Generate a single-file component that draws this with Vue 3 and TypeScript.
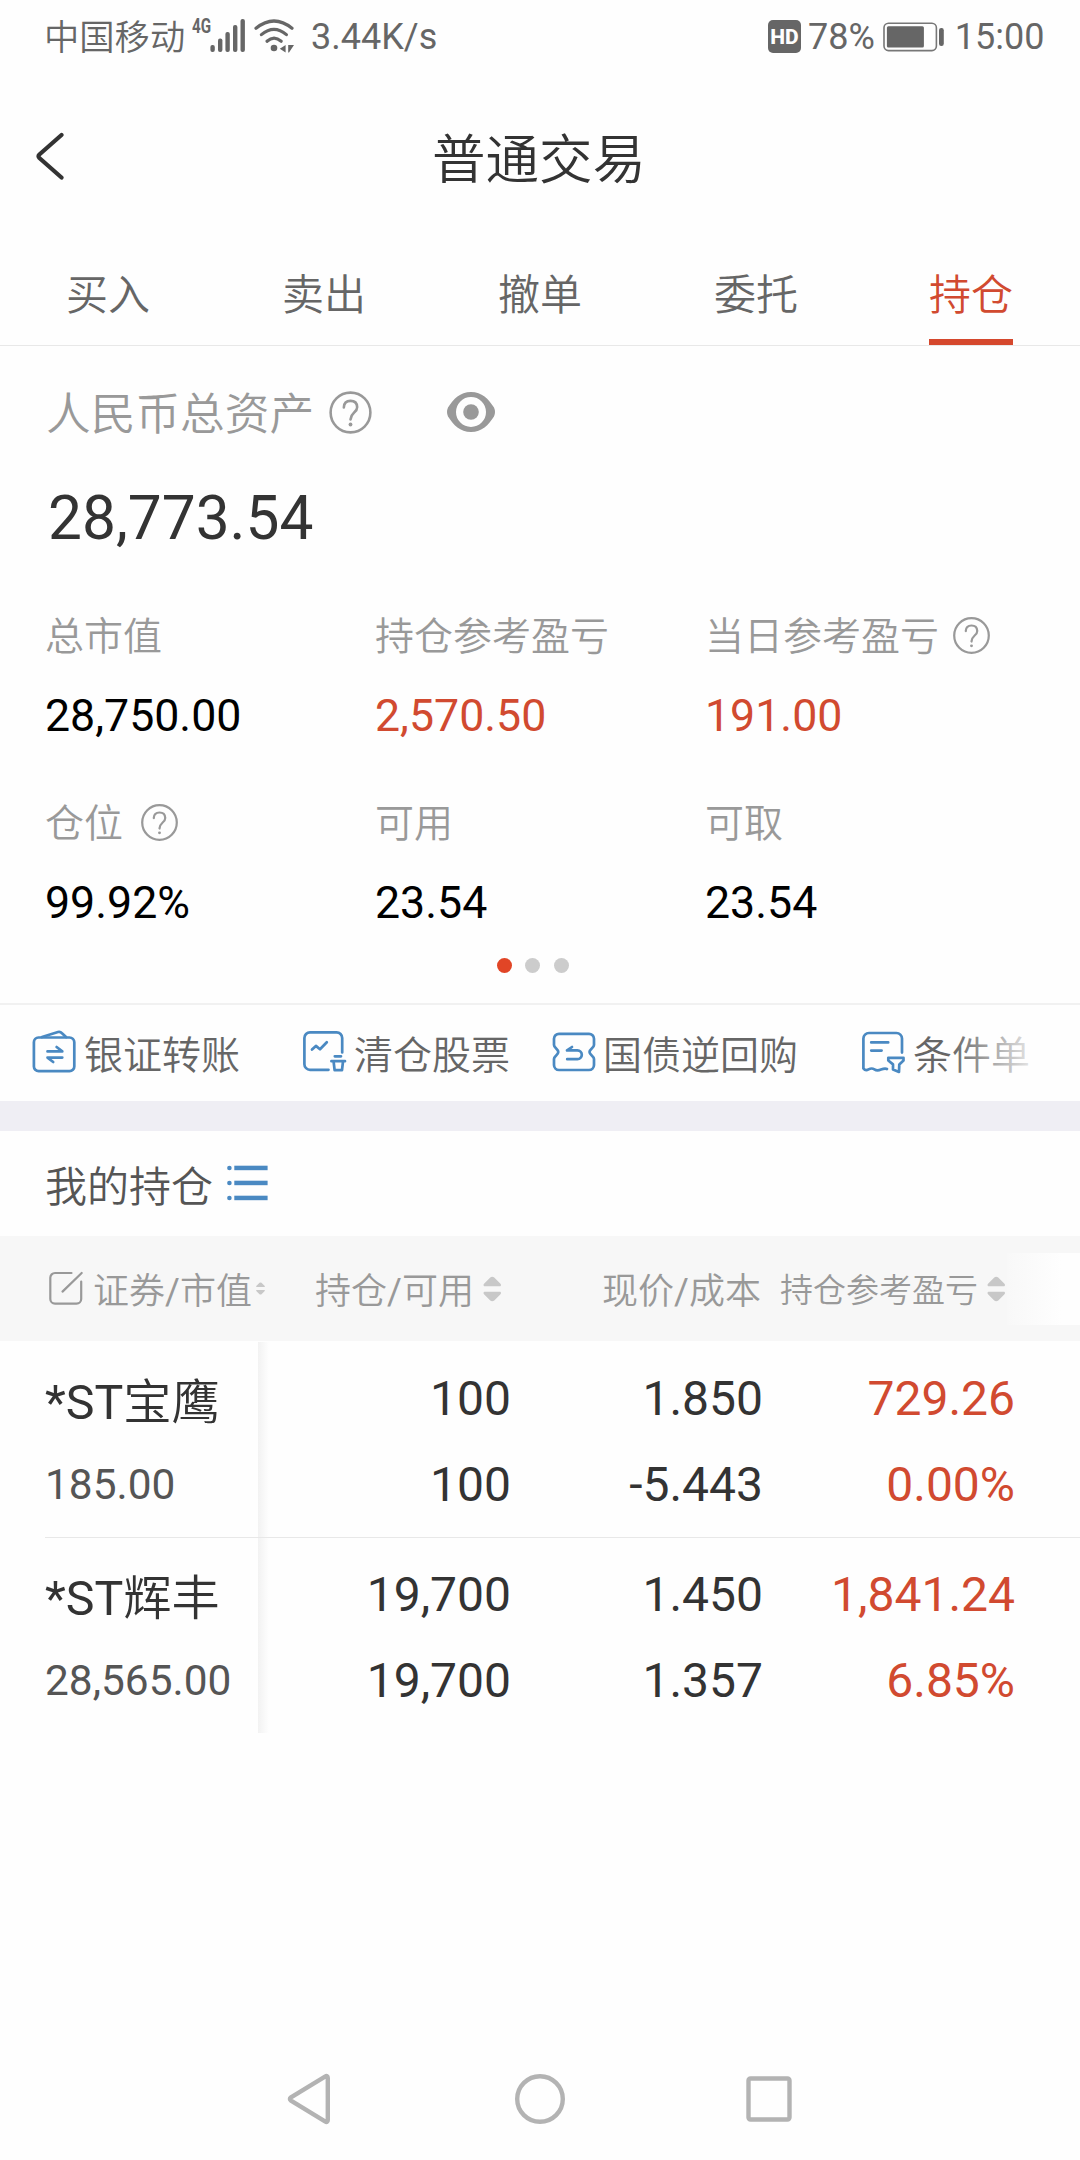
<script setup lang="ts">
interface Tab { label: string; active?: boolean }
interface Metric { label: string; value: string; up?: boolean; help?: boolean }
interface Action { label: string; icon: string[] }
interface Holding {
  prefix: string
  name: string
  marketValue: string
  cells: { top: string; bottom: string; up?: boolean }[]
}

const tabs: Tab[] = [
  { label: '买入' },
  { label: '卖出' },
  { label: '撤单' },
  { label: '委托' },
  { label: '持仓', active: true },
]

const metrics: Metric[] = [
  { label: '总市值', value: '28,750.00' },
  { label: '持仓参考盈亏', value: '2,570.50', up: true },
  { label: '当日参考盈亏', value: '191.00', up: true, help: true },
  { label: '仓位', value: '99.92%', help: true },
  { label: '可用', value: '23.54' },
  { label: '可取', value: '23.54' },
]

const actions: Action[] = [
  {
    label: '银证转账',
    icon: [
      'M6.5 8.5H37.5A4.8 4.8 0 0 1 42.3 13.3V37.4A4.8 4.8 0 0 1 37.5 42.2H6.7A4.8 4.8 0 0 1 1.9 37.4V13.3A4.8 4.8 0 0 1 6.5 8.5Z',
      'M10 8L26 3Q28.3 2.4 30 4.2L34 8',
      'M15.5 22.4H30.3L24.6 18M30.3 28.6H15.5L21.2 33',
    ],
  },
  {
    label: '清仓股票',
    icon: [
      'M40.2 23.5V9A5.6 5.6 0 0 0 34.6 3.4H8A5.6 5.6 0 0 0 2.4 9V35.2A5.6 5.6 0 0 0 8 40.8H26.5',
      'M10 20.6L13.9 16.9L18 20.3L24.8 13.2',
      'M32.8 27.3H39M29.4 32.2H43M31.6 32.5L32.6 41.2H40L41 32.5',
    ],
  },
  {
    label: '国债逆回购',
    icon: [
      'M8 4.8H38A5 5 0 0 1 43 9.8V16C43 19 38.5 20 38.5 23S43 27 43 30V36A5 5 0 0 1 38 41H8A5 5 0 0 1 3 36V30C3 27 7.3 26 7.3 23S3 19 3 16V9.8A5 5 0 0 1 8 4.8Z',
      'M21 18L16 21.4H26.4A4.4 4.4 0 0 1 26.4 30.2H16.2',
    ],
  },
  {
    label: '条件单',
    icon: [
      'M41 23.6V9.6A5.6 5.6 0 0 0 35.4 4H8A5.6 5.6 0 0 0 2.4 9.6V39.5Q4.5 42.2 7.6 40.4T13.4 40.4T20 40.6T26 40',
      'M10.2 13.4H27.2M10.2 21.6H20.6',
      'M27.3 28.8H42.5V31.5L38.3 35.4L38 43L32 40.6V35.4L27.3 31.5Z',
    ],
  },
]

const holdings: Holding[] = [
  {
    prefix: '*ST',
    name: '宝鹰',
    marketValue: '185.00',
    cells: [
      { top: '100', bottom: '100' },
      { top: '1.850', bottom: '-5.443' },
      { top: '729.26', bottom: '0.00%', up: true },
    ],
  },
  {
    prefix: '*ST',
    name: '辉丰',
    marketValue: '28,565.00',
    cells: [
      { top: '19,700', bottom: '19,700' },
      { top: '1.450', bottom: '1.357' },
      { top: '1,841.24', bottom: '6.85%', up: true },
    ],
  },
]
</script>

<template>
  <div class="screen">
    <div class="status">
      <span class="cjk carrier">中国移动</span>
      <span class="net">4G</span>
      <svg class="signal" width="36" height="34" viewBox="0 0 36 34">
        <g fill="#666">
          <rect x="0.4" y="26" width="4.4" height="7" rx="2" />
          <rect x="8" y="19.5" width="4.4" height="13.5" rx="2" />
          <rect x="15.4" y="13" width="4.4" height="20" rx="2" />
          <rect x="23" y="6" width="4.4" height="27" rx="2" />
          <rect x="30.5" y="0" width="4.4" height="33" rx="2" />
        </g>
      </svg>
      <svg class="wifi" width="40" height="34" viewBox="0 0 40 34">
        <g fill="none" stroke="#666" stroke-width="3.2" stroke-linecap="round">
          <path d="M2 9.3Q20 -5.3 38 9.3" />
          <path d="M7.4 15.6Q20 5 32.4 15.6" />
          <path d="M13 22.2Q20 16 27.2 22.2" />
        </g>
        <circle cx="20" cy="29" r="3.3" fill="#666" />
        <path d="M25.8 29.7L31.6 26V33.4ZM34.2 26H40L35 33.4H34.2Z" fill="#666" />
      </svg>
      <span class="speed">3.44K/s</span>
      <span class="hd">HD</span>
      <span class="pct">78%</span>
      <svg class="battery" width="62" height="30" viewBox="0 0 62 30">
        <rect x="1" y="1.2" width="52.4" height="27.4" rx="4.5" fill="none" stroke="#777" stroke-width="1.6" />
        <rect x="3.9" y="4.2" width="37" height="21.2" rx="1.5" fill="#666" />
        <rect x="56" y="6" width="4.8" height="18" rx="2.2" fill="#666" />
      </svg>
      <span class="clock">15:00</span>
    </div>

    <header class="title-bar">
      <svg class="back" width="30" height="50" viewBox="0 0 30 50">
        <path d="M26.5 4L4.400 23.5Q2.700 25.2 4.400 27L26.5 46.5" fill="none" stroke="#333" stroke-width="4.2" stroke-linecap="round" />
      </svg>
      <h1 class="cjk">普通交易</h1>
    </header>

    <nav class="tabs">
      <div v-for="t in tabs" :key="t.label" class="tab cjk" :class="{ active: t.active }">
        <span>{{ t.label }}</span>
      </div>
    </nav>

    <section class="assets">
      <div class="asset-label">
        <span class="cjk">人民币总资产</span>
        <svg class="help-lg" width="43" height="43" viewBox="0 0 40 40">
          <circle cx="20" cy="20" r="18.5" />
          <path d="M13.8 15.3Q14 9.2 20 9.2T26.2 15Q26.2 17.6 23.4 20T20 26.5" />
          <circle class="pt" cx="20" cy="31.2" r="1.8" />
        </svg>
        <svg class="eye" width="48" height="40" viewBox="0 0 48 40">
          <path fill="#999" fill-rule="evenodd" d="M24 0C35 0 41.5 7 47 15.5Q49 20 47 24.5C41.5 33 35 40 24 40S6.5 33 1 24.5Q-1 20 1 15.5C6.5 7 13 0 24 0ZM24 5A15 15 0 1 0 24 35A15 15 0 1 0 24 5Z" />
          <circle cx="24" cy="20" r="7.8" fill="#999" />
        </svg>
      </div>
      <div class="total">28,773.54</div>
      <div class="metrics">
        <div v-for="m in metrics" :key="m.label" class="metric">
          <div class="m-label">
            <span class="cjk">{{ m.label }}</span>
            <svg v-if="m.help" width="37" height="37" viewBox="0 0 40 40">
              <circle cx="20" cy="20" r="18.7" />
              <path d="M13.8 15.3Q14 9.2 20 9.2T26.2 15Q26.2 17.6 23.4 20T20 26.5" />
              <circle class="pt" cx="20" cy="31.2" r="1.6" />
            </svg>
          </div>
          <div class="m-value" :class="{ up: m.up }">{{ m.value }}</div>
        </div>
      </div>
      <div class="dots"><i class="on"></i><i></i><i></i></div>
    </section>

    <section class="actions">
      <div v-for="a in actions" :key="a.label" class="action">
        <svg width="45" height="45" viewBox="0 0 45 45">
          <path v-for="d in a.icon" :key="d" :d="d" />
        </svg>
        <span class="cjk">{{ a.label }}</span>
      </div>
      <div class="fade"></div>
    </section>

    <div class="band"></div>

    <section class="holdings">
      <div class="h-title">
        <span class="cjk">我的持仓</span>
        <svg width="41" height="36" viewBox="0 0 41 36">
          <g fill="#4a89c2">
            <circle cx="2.4" cy="3" r="2.3" /><circle cx="2.4" cy="18" r="2.3" /><circle cx="2.4" cy="33" r="2.3" />
            <rect x="7.3" y="0.7" width="33.3" height="4.5" /><rect x="7.3" y="15.7" width="33.3" height="4.5" /><rect x="7.3" y="30.7" width="33.3" height="4.5" />
          </g>
        </svg>
      </div>
      <div class="t-head cjk">
        <div class="th name">
          <svg class="edit" width="36" height="35" viewBox="0 0 36 35">
            <path d="M23.5 2H7A4.700 4.700 0 0 0 2.300 6.700V28A4.700 4.700 0 0 0 7 32.700H28.500A4.700 4.700 0 0 0 33.200 28V10.500M14.500 20.600L33.700 2" />
          </svg>
          <span>证券<b>/</b>市值</span>
          <svg class="sort-sm" width="9" height="13" viewBox="0 0 18 26">
            <path d="M1 10.200Q-0.500 9 1 7.500L7 1.600Q9 0 11 1.600L17 7.500Q18.500 9 17 10.200ZM1 15.800Q-0.500 17 1 18.500L7 24.400Q9 26 11 24.400L17 18.500Q18.500 17 17 15.800Z" />
          </svg>
        </div>
        <div class="th avail">
          <span>持仓<b>/</b>可用</span>
          <svg width="18.500" height="26" viewBox="0 0 18 26">
            <path d="M1 10.200Q-0.500 9 1 7.500L7 1.600Q9 0 11 1.600L17 7.500Q18.500 9 17 10.200ZM1 15.800Q-0.500 17 1 18.500L7 24.400Q9 26 11 24.400L17 18.500Q18.500 17 17 15.800Z" />
          </svg>
        </div>
        <div class="th price"><span>现价<b>/</b>成本</span></div>
        <div class="th profit">
          <span>持仓参考盈亏</span>
          <svg width="18.500" height="26" viewBox="0 0 18 26">
            <path d="M1 10.200Q-0.500 9 1 7.500L7 1.600Q9 0 11 1.600L17 7.500Q18.500 9 17 10.200ZM1 15.800Q-0.500 17 1 18.500L7 24.400Q9 26 11 24.400L17 18.500Q18.500 17 17 15.800Z" />
          </svg>
        </div>
        <div class="head-fade"></div>
      </div>
      <div class="rows">
        <div v-for="h in holdings" :key="h.name" class="row">
          <div class="stock">
            <div class="s-name">{{ h.prefix }}<span class="cjk">{{ h.name }}</span></div>
            <div class="s-value">{{ h.marketValue }}</div>
          </div>
          <div v-for="(c, i) in h.cells" :key="i" class="cell" :class="{ up: c.up }">
            <div>{{ c.top }}</div>
            <div>{{ c.bottom }}</div>
          </div>
        </div>
      </div>
    </section>

    <footer class="sysnav">
      <svg width="44" height="52" viewBox="0 0 44 52">
        <path d="M38 3.600Q40.800 2 40.800 5V47Q40.800 50 38 48.400L4 27.600Q1.800 26 4 24.400Z" />
      </svg>
      <svg width="52" height="52" viewBox="0 0 52 52"><circle cx="26" cy="26" r="22.8" /></svg>
      <svg width="46" height="46" viewBox="0 0 46 46"><rect x="2.5" y="2.5" width="41" height="41" rx="2" /></svg>
    </footer>
  </div>
</template>

<style>
body {
  background: #fefefe;
}
</style>

<style scoped>
.screen {
  width: 1080px;
  height: 2160px;
  display: flex;
  flex-direction: column;
  overflow: hidden;
  background: #fefefe;
  color: #333;
  font-family: Roboto, 'Noto Sans CJK SC', sans-serif;
}
svg {
  display: block;
  flex: none;
}
.cjk {
  font-weight: 350;
}
.status {
  display: flex;
  height: 74px;
  padding: 0 35px 0 44px;
  color: #666;
  font-size: 36px;
  line-height: 74px;
}
.carrier {
  width: 143.5px;
  font-size: 35.3px;
  line-height: 77px;
}
.net {
  width: 18px;
  margin: 16px 0 0 4px;
  font: 700 20px/20px Roboto, sans-serif;
  transform: scaleX(0.76);
  transform-origin: left;
}
.signal {
  margin: 19px 8px 0 0.5px;
}
.wifi {
  margin: 19px 17px 0 0;
}
.hd {
  width: 33px;
  height: 33px;
  margin: 20px 7px 0 auto;
  border-radius: 5px;
  background: #666;
  color: #fefefe;
  font-size: 21px;
  font-weight: 800;
  line-height: 34px;
  text-align: center;
}
.battery {
  margin: 22px 10px 0 8px;
}
.clock {
  margin-right: 0.5px;
}
.title-bar {
  display: grid;
  grid-template-columns: 100px 1fr 102px;
  align-items: center;
  height: 172px;
}
.back {
  margin: -8px 0 0 35px;
}
h1 {
  margin: 0;
  color: #333;
  font-size: 53.5px;
  line-height: 171px;
  text-align: center;
}
.tabs {
  display: flex;
  height: 99px;
  border-bottom: 1px solid #e8e8e8;
}
.tab {
  flex: 1;
  display: flex;
  justify-content: center;
  color: #666;
  font-size: 42px;
  line-height: 99px;
}
.tab.active span {
  box-sizing: border-box;
  height: 99px;
  margin-right: 2px;
  border-bottom: 6px solid #d5482d;
  color: #d14a30;
}
.assets {
  height: 657px;
  display: flex;
  flex-direction: column;
}
.asset-label {
  display: flex;
  align-items: center;
  height: 132px;
  padding-left: 46px;
  color: #999;
  font-size: 44.7px;
}
.asset-label span {
  padding-bottom: 4px;
}
.asset-label svg,
.m-label svg {
  fill: none;
  stroke: #999;
  stroke-width: 2.4;
  stroke-linecap: round;
}
.asset-label .pt,
.m-label .pt {
  fill: #999;
  stroke: none;
}
.help-lg {
  margin-left: 15px;
}
.asset-label .eye {
  margin-left: 75px;
  stroke: none;
}
.total {
  padding-left: 48px;
  color: #333;
  font-size: 60.4px;
  line-height: 82px;
}
.metrics {
  display: grid;
  grid-template-columns: 330px 330px 1fr;
  grid-auto-rows: 187px;
  height: 374px;
  padding: 36px 0 0 45px;
}
.m-label {
  display: flex;
  align-items: center;
  height: 79px;
  gap: 14px;
  color: #999;
  font-size: 39px;
}
.m-label span {
  padding-bottom: 5px;
}
.metric:nth-child(4) .m-label {
  gap: 17.5px;
}
.m-value {
  padding-top: 1px;
  color: #000;
  font-size: 44.7px;
  line-height: 80px;
}
.up,
.m-value.up {
  color: #d14a30;
}
.dots {
  display: flex;
  justify-content: center;
  gap: 13.5px;
  padding: 0 15px 0 0;
  margin-top: -12px;
}
.dots i {
  width: 15px;
  height: 15px;
  border-radius: 50%;
  background: #ccc;
}
.dots .on {
  background: #e14526;
}
.actions {
  position: relative;
  display: grid;
  grid-template-columns: 270px 249px 310px 1fr;
  height: 96px;
  padding-left: 32px;
  border-top: 2px solid #f1f1f1;
  color: #666;
  font-size: 39px;
}
.action {
  display: flex;
  gap: 7px;
  height: 96px;
  white-space: nowrap;
  line-height: 102px;
}
.action svg {
  margin-top: 24px;
  fill: none;
  stroke: #4a89c2;
  stroke-width: 2.7;
  stroke-linecap: round;
  stroke-linejoin: round;
}
.fade {
  position: absolute;
  top: 0;
  right: 0;
  width: 130px;
  height: 96px;
  background: linear-gradient(to right, rgba(254, 254, 254, 0), #fefefe 97px);
}
.band {
  height: 30px;
  background: #efeef4;
}
.h-title {
  display: flex;
  align-items: center;
  height: 105px;
  padding-left: 45px;
  color: #555;
  font-size: 42px;
}
.h-title svg {
  margin: -2px 0 0 14px;
}
.t-head {
  position: relative;
  display: flex;
  height: 105px;
  background: #f7f7f7;
  color: #999;
  font-size: 36px;
}
.th {
  display: flex;
  align-items: center;
  white-space: nowrap;
}
.th span {
  padding-bottom: 1px;
}
.th b {
  font-weight: 400;
}
.th svg {
  fill: #c8c8c8;
}
.th .edit {
  margin-right: 9px;
  fill: none;
  stroke: #999;
  stroke-width: 2.2;
  stroke-linecap: round;
}
.name {
  width: 267px;
  padding-left: 48px;
}
.name .sort-sm {
  margin-left: 4px;
}
.avail {
  width: 287px;
}
.avail svg {
  margin-left: 9px;
}
.price {
  width: 178px;
}
.profit {
  font-size: 33px;
}
.profit svg {
  margin-left: 9px;
}
.head-fade {
  position: absolute;
  top: 17px;
  right: 0;
  width: 73px;
  height: 72px;
  background: linear-gradient(to right, #f8f8f8, #fefefe 75%);
}
.row {
  position: relative;
  box-sizing: border-box;
  display: flex;
  height: 196px;
  margin-left: 45px;
}
.row + .row {
  border-top: 1px solid #e8e8e8;
}
.row::after {
  content: '';
  position: absolute;
  top: 1px;
  bottom: 0;
  left: 213px;
  width: 11px;
  background: linear-gradient(to right, #f2f2f2, rgba(254, 254, 254, 0));
}
.row + .row::after {
  top: 0;
}
.stock {
  width: 213px;
  padding-top: 22px;
}
.s-name {
  height: 79px;
  font-size: 48.3px;
  line-height: 80px;
  white-space: nowrap;
}
.s-value {
  color: #555;
  font-size: 42.4px;
  line-height: 85px;
}
.cell {
  width: 252px;
  padding-top: 15px;
  font-size: 48px;
  line-height: 86px;
  text-align: right;
}
.stock + .cell {
  width: 253px;
}
.row + .row .stock {
  padding-top: 21px;
}
.row + .row .cell {
  padding-top: 14px;
}
.sysnav {
  display: flex;
  align-items: center;
  height: 122px;
  margin-top: auto;
  padding-left: 286.5px;
}
.sysnav svg {
  fill: none;
  stroke: #b3b3b3;
  stroke-width: 4.4;
}
.sysnav svg + svg {
  margin-left: 183.5px;
}
.sysnav svg + svg + svg {
  margin-left: 180px;
}
</style>
